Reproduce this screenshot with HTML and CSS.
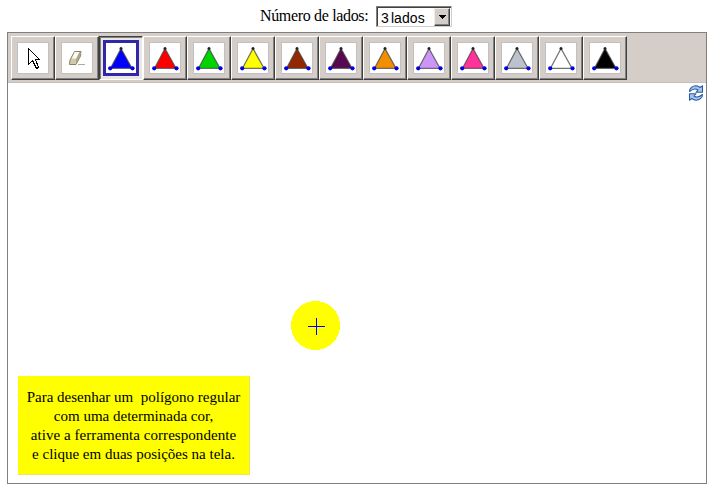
FILE: index.html
```html
<!DOCTYPE html>
<html lang="pt">
<head>
<meta charset="utf-8">
<title>Polígonos regulares</title>
<link rel="stylesheet" href="styles.css">
</head>
<body>
<svg class="defs" width="0" height="0">
  <symbol id="tri" viewBox="0 0 30 30">
    <path d="M15 5.500L26 25.300H4.500Z" fill="currentColor" stroke="#444" stroke-opacity=".75" stroke-width="1.300"/>
    <circle cx="15" cy="5.500" r="1.500" fill="#222"/>
    <circle cx="4.200" cy="25.300" r="2.100" fill="#0000e0"/>
    <circle cx="26.500" cy="25.300" r="2.100" fill="#0000e0"/>
  </symbol>
</svg>
<div class="header">
  <span class="label">Número de lados:</span>
  <div class="select"><span class="value">3 lados</span><span class="drop"><svg width="7" height="4" shape-rendering="crispEdges"><path d="M0 0h7v1H0zM1 1h5v1H1zM2 2h3v1H2zM3 3h1v1H3z"/></svg></span></div>
</div>
<div class="frame">
  <div class="toolbar">
    <div class="tool"><div class="icon"><svg width="30" height="30" shape-rendering="crispEdges"><path d="M10.500 5.500V21.500L14.500 17.500L18.500 25.500L20.500 24.500L17.500 16.500H21.500Z" fill="#fff" stroke="#000"/></svg></div></div>
    <div class="tool"><div class="icon"><svg width="30" height="30"><path d="M12.500 8.500H19L18.500 13L14 21.500H7.500L8 17Z" fill="#d2cfad" stroke="#858268"/><path d="M12.800 9H17.500L14.500 15.500H9.800Z" fill="#fbfaf2"/><path d="M17.500 9L18.700 9.500L18 13L14 21L13.500 17Z" fill="#aaa68b"/><path d="M9.500 16H14L13.500 21H8.500Z" fill="#d0cca9"/><path d="M16 21.500H23" stroke="#aaa"/></svg></div></div>
    <div class="tool active"><div class="icon blue"><svg width="30" height="30"><use href="#tri"/></svg></div></div>
    <div class="tool"><div class="icon red"><svg width="30" height="30"><use href="#tri"/></svg></div></div>
    <div class="tool"><div class="icon green"><svg width="30" height="30"><use href="#tri"/></svg></div></div>
    <div class="tool"><div class="icon yellow"><svg width="30" height="30"><use href="#tri"/></svg></div></div>
    <div class="tool"><div class="icon brown"><svg width="30" height="30"><use href="#tri"/></svg></div></div>
    <div class="tool"><div class="icon purple"><svg width="30" height="30"><use href="#tri"/></svg></div></div>
    <div class="tool"><div class="icon orange"><svg width="30" height="30"><use href="#tri"/></svg></div></div>
    <div class="tool"><div class="icon lilac"><svg width="30" height="30"><use href="#tri"/></svg></div></div>
    <div class="tool"><div class="icon pink"><svg width="30" height="30"><use href="#tri"/></svg></div></div>
    <div class="tool"><div class="icon gray"><svg width="30" height="30"><use href="#tri"/></svg></div></div>
    <div class="tool"><div class="icon white"><svg width="30" height="30"><use href="#tri"/></svg></div></div>
    <div class="tool"><div class="icon black"><svg width="30" height="30"><use href="#tri"/></svg></div></div>
  </div>
  <div class="canvas">
    <svg class="refresh" width="16" height="16" viewBox="0 0 16 16"><g fill="#a3c6ea" stroke="#2c5ca6" stroke-width="1.100" stroke-linejoin="round"><path d="M1.500 6.500C1.500 3 4.500 .800 8 .800C10 .900 11.200 1.700 12.200 2.500L14.500 .800V7.300H8L10 5C8 3.500 5 3.500 1.500 6.500Z"/><path d="M14.500 9.500C14.500 13 11.500 15.200 8 15.200C6 15.100 4.800 14.300 3.800 13.500L1.500 15.200V8.700H8L6 11C8 12.500 11 12.500 14.500 9.500Z"/></g></svg>
    <div class="point"><svg width="49" height="49" shape-rendering="crispEdges"><circle cx="24.500" cy="24.500" r="24.500" fill="#ff0"/><path d="M17 25h17v1H17zM25 17h1v17H25z" fill="#00f"/></svg></div>
    <div class="note">
      <div>Para desenhar um&nbsp; polígono regular</div>
      <div>com uma determinada cor,</div>
      <div class="wide">ative a ferramenta correspondente</div>
      <div>e clique em duas posições na tela.</div>
    </div>
  </div>
</div>
</body>
</html>
```
FILE: styles.css
```css
* { box-sizing: border-box; }
body { margin: 0; width: 716px; height: 488px; background: #fff; overflow: hidden; font: 15px "Liberation Serif", serif; color: #000; }
svg { display: block; }
.defs { position: absolute; }
.header { display: flex; height: 32px; padding: 6px 0 0 260px; }
.label { width: 116px; line-height: 20px; font-size: 16px; letter-spacing: -.34px; white-space: nowrap; }
.select { display: flex; width: 76px; height: 21px; border: 1px solid #808080; border-right-color: #d4ccc6; border-bottom-color: #d4ccc6; box-shadow: inset 1px 1px #404040; padding: 1px; font: 14px/20px "Liberation Sans", sans-serif; }
.value { flex: 1; padding-left: 3px; white-space: nowrap; word-spacing: -2px; letter-spacing: .1px; }
.drop { display: flex; width: 16px; height: 18px; align-items: center; justify-content: center; background: #d5cdc7; border: 1px solid; border-color: #eee #404040 #404040 #eee; box-shadow: inset -1px -1px #808080; }
.frame { margin-left: 7px; width: 700px; height: 452px; border: 1px solid #808080; }
.toolbar { display: flex; height: 50px; padding: 3px 0 0 3px; background: #d5cdc7; border-bottom: 1px solid #c0c0c0; }
.tool { width: 44px; height: 44px; padding: 5px 0 0 5px; border: 1px solid; border-color: #fff #404040 #404040 #fff; box-shadow: inset -1px -1px #808080; }
.tool.active { padding: 3px 0 0 3px; border-color: #404040 #fff #fff #404040; box-shadow: inset 1px 1px #808080; background: #ebe6e2; }
.icon { width: 32px; height: 32px; border: 1px solid #c0c0c0; background: #fff; }
.active .icon { width: 36px; height: 36px; border: 3px solid #3028a8; }
.blue { color: #00f; }
.red { color: #f00; }
.green { color: #00d500; }
.yellow { color: #ff0; }
.brown { color: #932900; }
.purple { color: #580850; }
.orange { color: #f09000; }
.lilac { color: #cc95f7; }
.pink { color: #ff3399; }
.gray { color: #bcc3cc; }
.white { color: #fff; }
.black { color: #000; }
.canvas { position: relative; height: 400px; }
.refresh { position: absolute; right: 2px; top: 2px; }
.point { position: absolute; left: 283px; top: 218px; }
.note { position: absolute; left: 10px; top: 293px; width: 232px; height: 99px; padding-top: 12px; background: #ff0; border-right: 1px solid #f0e060; border-bottom: 1px solid #f0e060; line-height: 19px; text-align: center; white-space: nowrap; }
.wide { letter-spacing: .05px; }
```
